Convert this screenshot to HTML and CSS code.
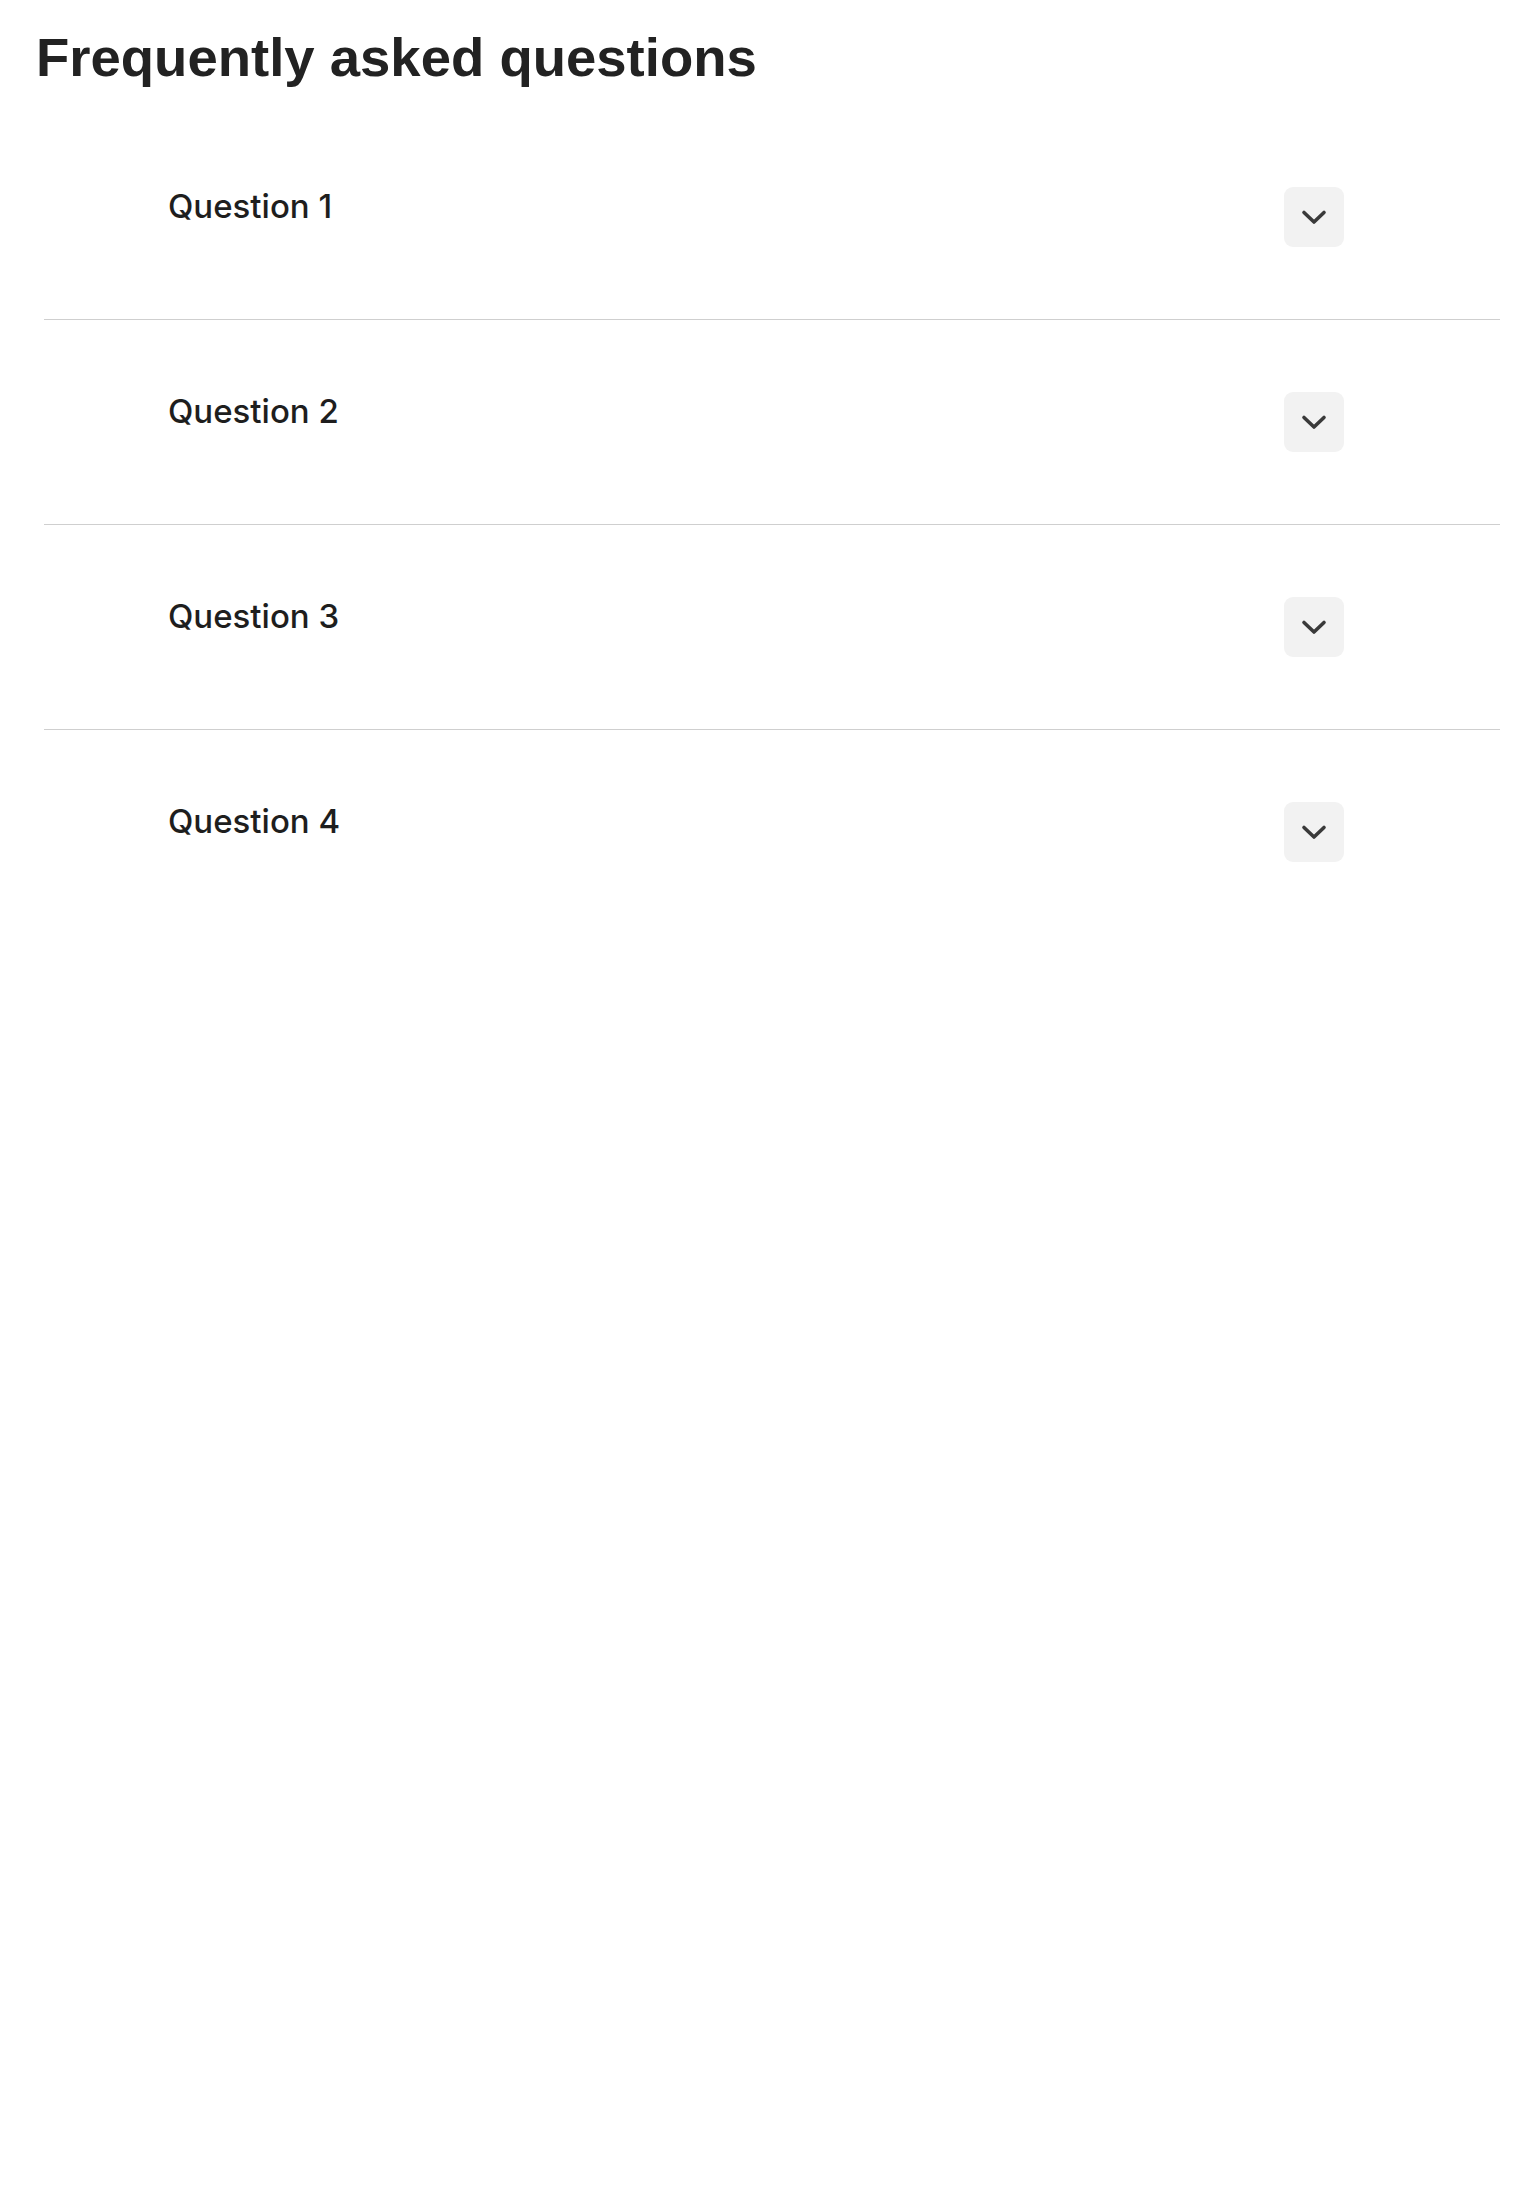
FILE: index.html
```html
<!DOCTYPE html>
<html lang="en">
<head>
<meta charset="utf-8">
<title>Frequently asked questions</title>
<link rel="stylesheet" href="styles.css">
</head>
<body>
<main class="faq">
  <h1 class="faq-title">Frequently asked questions</h1>
  <div class="faq-list">
    <div class="faq-item">
      <h2 class="faq-question">Question 1</h2>
      <button class="faq-toggle" aria-label="Expand">
        <svg width="26" height="16" viewBox="0 0 26 16"><polyline points="3,3.5 13,13 23,3.5" fill="none" stroke="#3a3a3a" stroke-width="3.6" stroke-linecap="round" stroke-linejoin="round"/></svg>
      </button>
    </div>
    <div class="faq-item">
      <h2 class="faq-question">Question 2</h2>
      <button class="faq-toggle" aria-label="Expand">
        <svg width="26" height="16" viewBox="0 0 26 16"><polyline points="3,3.5 13,13 23,3.5" fill="none" stroke="#3a3a3a" stroke-width="3.6" stroke-linecap="round" stroke-linejoin="round"/></svg>
      </button>
    </div>
    <div class="faq-item">
      <h2 class="faq-question">Question 3</h2>
      <button class="faq-toggle" aria-label="Expand">
        <svg width="26" height="16" viewBox="0 0 26 16"><polyline points="3,3.5 13,13 23,3.5" fill="none" stroke="#3a3a3a" stroke-width="3.6" stroke-linecap="round" stroke-linejoin="round"/></svg>
      </button>
    </div>
    <div class="faq-item">
      <h2 class="faq-question">Question 4</h2>
      <button class="faq-toggle" aria-label="Expand">
        <svg width="26" height="16" viewBox="0 0 26 16"><polyline points="3,3.5 13,13 23,3.5" fill="none" stroke="#3a3a3a" stroke-width="3.6" stroke-linecap="round" stroke-linejoin="round"/></svg>
      </button>
    </div>
  </div>
</main>
</body>
</html>
```
FILE: styles.css
```css
html, body {
  margin: 0;
  padding: 0;
  background: #ffffff;
}

body {
  color: #222222;
  font-family: Inter, "Noto Sans", sans-serif;
}

.faq {
  display: flex;
  flex-direction: column;
}

.faq-title {
  margin: 0;
  padding: 27px 0 0 36px;
  font-family: "Liberation Sans", Arial, sans-serif;
  font-weight: 700;
  font-size: 54.5px;
  line-height: 62px;
  color: #222222;
}

.faq-list {
  margin: 26px 36px 0 44px;
  display: flex;
  flex-direction: column;
}

.faq-item {
  display: flex;
  align-items: flex-start;
  justify-content: space-between;
  padding: 72px 156px 72px 124px;
}

.faq-item + .faq-item {
  border-top: 1px solid #cfcfcf;
}

.faq-question {
  margin: 0;
  font-family: Inter, sans-serif;
  font-weight: 550;
  font-size: 33px;
  line-height: 39px;
  letter-spacing: 0;
  color: #1e1e1e;
}

.faq-toggle {
  width: 60px;
  height: 60px;
  border: none;
  border-radius: 9px;
  background: #f2f2f2;
  display: flex;
  align-items: center;
  justify-content: center;
  padding: 0;
  cursor: pointer;
}

.faq-toggle svg {
  display: block;
}
```
